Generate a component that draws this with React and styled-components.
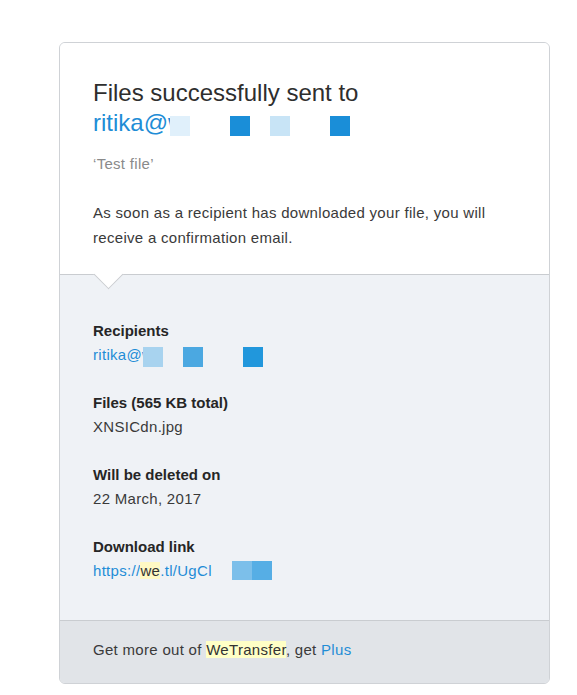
import React from "react";
import styled, { createGlobalStyle } from "styled-components";

const GlobalStyle = createGlobalStyle`
  html, body {
    margin: 0;
    padding: 0;
    background: #ffffff;
  }
  body {
    font-family: "Liberation Sans", Arial, sans-serif;
    color: #333;
  }
`;

const Page = styled.div`
  padding: 42px 0 10px 59px;
`;

const Card = styled.div`
  width: 491px;
  box-sizing: border-box;
  border: 1px solid #cfd2d6;
  border-radius: 6px;
  overflow: hidden;
  background: #eff2f6;
`;

const Top = styled.div`
  position: relative;
  background: #ffffff;
  padding: 35px 33px 24px;
  border-bottom: 1px solid #c9ccd0;
`;

const Caret = styled.span`
  position: absolute;
  left: 38px;
  bottom: -11px;
  width: 20px;
  height: 20px;
  background: #ffffff;
  border-right: 1px solid #c9ccd0;
  border-bottom: 1px solid #c9ccd0;
  transform: rotate(45deg);
`;

const Title = styled.h1`
  margin: 0;
  font-size: 24px;
  line-height: 30px;
  font-weight: 400;
  color: #2e2e2e;
`;

const Link = styled.span`
  color: #1f8dd6;
`;

const Redact = styled.span`
  display: inline-block;
  width: ${(p) => p.$w || 20}px;
  height: ${(p) => p.$h || 20}px;
  margin-left: ${(p) => p.$ml || 0}px;
  background: ${(p) => p.$color};
  vertical-align: ${(p) => p.$va || 0}px;
`;

const Subject = styled.p`
  margin: 14px 0 0;
  font-size: 15px;
  line-height: 24px;
  letter-spacing: 0.3px;
  color: #8a8a8a;
`;

const Body = styled.p`
  margin: 24px 0 0;
  font-size: 15px;
  line-height: 25px;
  letter-spacing: 0.3px;
  color: #3a3a3a;
`;

const Details = styled.div`
  display: flex;
  flex-direction: column;
  gap: 24px;
  padding: 44px 33px 37px;
`;

const Field = styled.div`
  font-size: 15px;
  line-height: 24px;
`;

const Label = styled.div`
  font-weight: 700;
  color: #262626;
`;

const Value = styled.div`
  color: #3a3a3a;
  letter-spacing: 0.3px;
`;

const Mark = styled.span`
  background: ${(p) => p.$bg || "#fff9c4"};
  color: #333;
`;

const Footer = styled.div`
  background: #e1e4e8;
  border-top: 1px solid #c9ccd0;
  padding: 17px 33px 21px;
  font-size: 15px;
  line-height: 24px;
  letter-spacing: 0.3px;
  color: #3a3a3a;
`;

const fields = [
  { label: "Files (565 KB total)", value: "XNSICdn.jpg" },
  { label: "Will be deleted on", value: "22 March, 2017" },
];

export default function App() {
  return (
    <>
      <GlobalStyle />
      <Page>
        <Card>
          <Top>
            <Title>
              Files successfully sent to
              <br />
              <Link>ritika@w</Link>
              <Redact $color="#e0f0fb" $ml={-15} $va={-5} />
              <Redact $color="#1a8ed8" $ml={40} $va={-5} />
              <Redact $color="#c8e4f6" $ml={20} $va={-5} />
              <Redact $color="#1a8ed8" $ml={40} $va={-5} />
            </Title>
            <Subject>‘Test file’</Subject>
            <Body>
              As soon as a recipient has downloaded your file, you will
              receive a confirmation email.
            </Body>
            <Caret />
          </Top>
          <Details>
            <Field>
              <Label>Recipients</Label>
              <Value>
                <Link>ritika@w</Link>
                <Redact $color="#a8d3ef" $ml={-10} $va={-7} />
                <Redact $color="#4ba8e1" $ml={20} $va={-7} />
                <Redact $color="#2197dc" $ml={40} $va={-7} />
              </Value>
            </Field>
            {fields.map((f) => (
              <Field key={f.label}>
                <Label>{f.label}</Label>
                <Value>{f.value}</Value>
              </Field>
            ))}
            <Field>
              <Label>Download link</Label>
              <Value>
                <Link>
                  https://<Mark>we</Mark>.tl/UgCl
                </Link>
                <Redact $color="#7cbfea" $ml={20} $h={19} $va={-4} />
                <Redact $color="#56aee5" $h={19} $va={-4} />
              </Value>
            </Field>
          </Details>
          <Footer>
            Get more out of <Mark $bg="#ffffc6">WeTransfer</Mark>, get{" "}
            <Link>Plus</Link>
          </Footer>
        </Card>
      </Page>
    </>
  );
}
